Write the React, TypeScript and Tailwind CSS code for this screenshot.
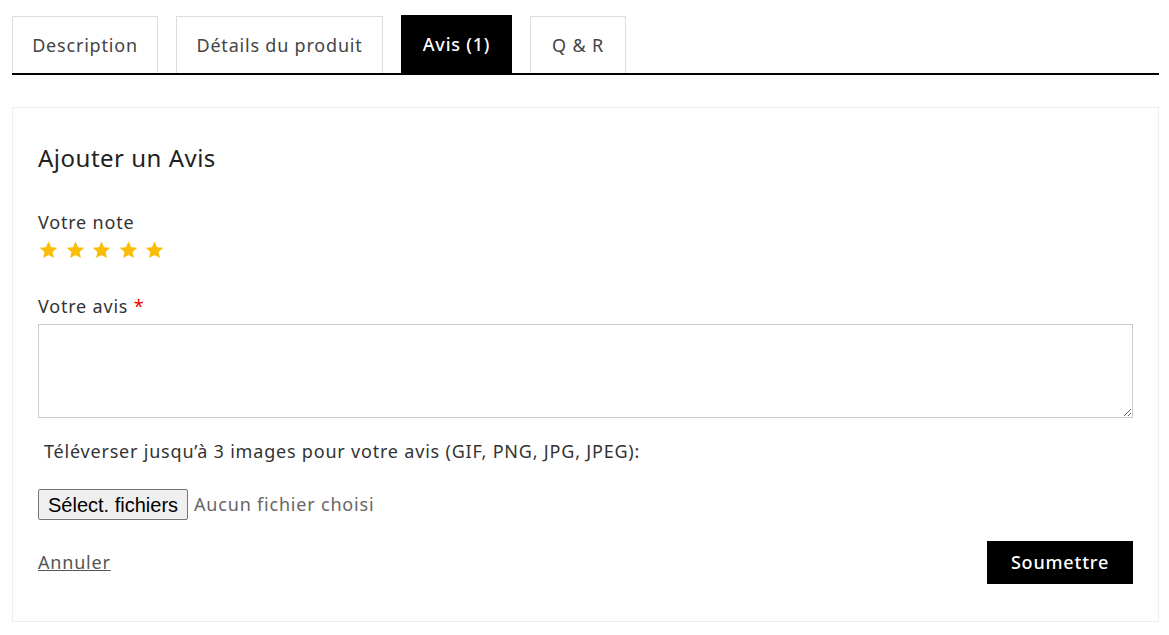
import React from "react";

const Star = () => (
  <svg width="21" height="20" viewBox="0 0 24 24" className="block">
    <path
      d="M12 1.8l3.05 6.9 7.45.7-5.65 4.95 1.7 7.35L12 17.85 5.45 21.7l1.7-7.35L1.5 9.4l7.45-.7z"
      fill="#fbbc05"
    />
  </svg>
);

export default function App() {
  const font = { fontFamily: '"Noto Sans", "Open Sans", sans-serif' };
  return (
    <div className="w-[1169px] h-[635px] bg-white text-[#333] tracking-[0.8px]" style={font}>
      <div className="pl-[12px] pr-[10px] pt-[15px]">
        <div className="flex items-end gap-[18px] border-b-2 border-black">
          <div className="h-[57px] w-[146px] border border-b-0 border-[#ddd] flex items-center justify-center text-[18px] text-[#444]">
            Description
          </div>
          <div className="h-[57px] w-[207px] border border-b-0 border-[#ddd] flex items-center justify-center text-[18px] text-[#444]">
            Détails du produit
          </div>
          <div className="h-[58px] w-[111px] bg-black flex items-center justify-center text-[18px] text-white font-medium">
            Avis (1)
          </div>
          <div className="h-[57px] w-[96px] border border-b-0 border-[#ddd] flex items-center justify-center text-[18px] text-[#444]">
            Q &amp; R
          </div>
        </div>
        <div className="mt-[32px] border border-[#eee] h-[515px] px-[25px] pt-[34px]">
          <h2 className="text-[24px] leading-[32px] text-[#222] tracking-[0.5px]">Ajouter un Avis</h2>
          <div className="mt-[35px] text-[18px] leading-[26px] text-[#333]">Votre note</div>
          <div className="flex gap-[5.5px] mt-[5px]">
            <Star />
            <Star />
            <Star />
            <Star />
            <Star />
          </div>
          <div className="mt-[33px] text-[18px] leading-[26px] text-[#333]">
            Votre avis <span className="text-[#e00]">*</span>
          </div>
          <textarea className="mt-[5px] block w-full h-[94px] border border-[#ccc] resize-y"></textarea>
          <div className="mt-[20px] text-[18px] leading-[26px] text-[#333] pl-[6px]">
            Téléverser jusqu’à 3 images pour votre avis (GIF, PNG, JPG, JPEG):
          </div>
          <div className="mt-[25px] flex items-center">
            <span
              className="h-[31px] px-[9px] flex items-center bg-[#efefef] border border-[#767676] rounded-[2px] text-[20px] text-black tracking-normal"
              style={{ fontFamily: '"Liberation Sans", Arial, sans-serif' }}
            >
              Sélect. fichiers
            </span>
            <span className="ml-[6px] text-[18px] text-[#666]">Aucun fichier choisi</span>
          </div>
          <div className="mt-[21px] flex items-center justify-between">
            <a className="text-[18px] text-[#555] underline">Annuler</a>
            <button className="w-[146px] h-[43px] bg-black text-white text-[18px] font-medium">
              Soumettre
            </button>
          </div>
        </div>
      </div>
    </div>
  );
}
